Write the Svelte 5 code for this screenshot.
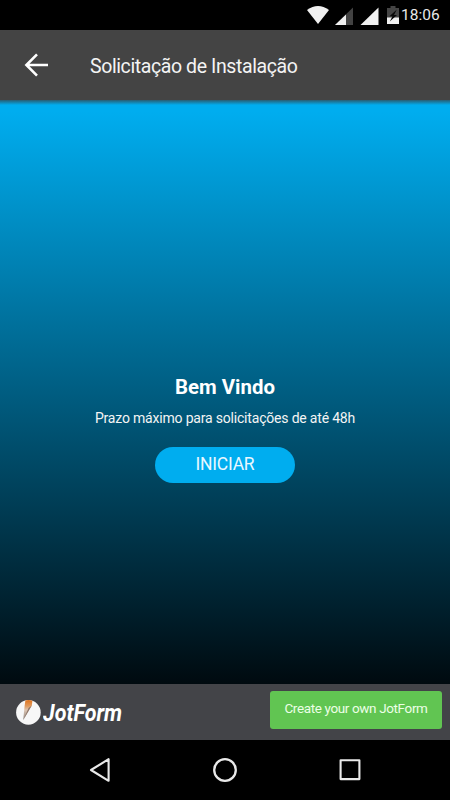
<script>
  const title = 'Solicitação de Instalação';
</script>

<div class="screen">
  <div class="status">
    <svg class="status-icons" width="94" height="30" viewBox="306 0 94 30" aria-hidden="true">
      <path d="M307 10 Q318 2 329 10 L318 24 Z" fill="#f0f0f0" />
      <path d="M353 7.5 V25 H335 Z" fill="#424242" />
      <path d="M346 14.5 V25 H335 Z" fill="#f0f0f0" />
      <path d="M378.5 7.5 V25 H360.5 Z" fill="#f0f0f0" />
      <path d="M387 8 H390.5 V6 H395.5 V8 H399 V24 H387 Z" fill="#454545" />
      <path d="M387 17.5 H399 V24 H387 Z" fill="#f0f0f0" />
      <path d="M396.8 9.5 L389.5 16.3 H392.5 L389.8 21.5 L397 15 H394 Z" fill="#080808" />
    </svg>
    <span class="time">18:06</span>
  </div>

  <header>
    <svg class="back" width="25" height="24" viewBox="0 0 25 24" fill="none" stroke="#fff" stroke-width="2.6" aria-hidden="true">
      <path d="M2.4 12 H24 M13 1.4 L2.4 12 L13 22.6" />
    </svg>
    <h1>{title}</h1>
  </header>

  <main>
    <h2>Bem Vindo</h2>
    <p>Prazo máximo para solicitações de até 48h</p>
    <button class="start">INICIAR</button>
  </main>

  <footer>
    <div class="brand">
      <svg width="26" height="26" viewBox="0 0 26 26" aria-hidden="true">
        <defs>
          <linearGradient id="pencil" x1="0" y1="0" x2="0" y2="1">
            <stop offset="0" stop-color="#e0731c" />
            <stop offset=".3" stop-color="#e09a5e" />
            <stop offset=".5" stop-color="#dcc4b2" />
            <stop offset="1" stop-color="#8a8480" />
          </linearGradient>
        </defs>
        <circle cx="12.4" cy="12.4" r="12.3" fill="#f7f7f7" />
        <path d="M9.4 .5 Q13 -.4 16.4 .8 L15.8 5.5 L7.2 20 L8.6 6 Z" fill="url(#pencil)" />
        <path d="M15.8 5.5 L7.2 20 L12.6 8 Z" fill="#8d7466" />
      </svg>
      <span>JotForm</span>
    </div>
    <button class="create">Create your own JotForm</button>
  </footer>

  <nav>
    <svg width="26" height="26" viewBox="0 0 26 26" fill="none" stroke="#e9e9e9" stroke-width="2.1" stroke-linejoin="round">
      <path d="M4 13 L21.6 2.2 V23.8 Z" />
    </svg>
    <svg width="26" height="26" viewBox="0 0 26 26" fill="none" stroke="#e9e9e9" stroke-width="2.3">
      <circle cx="13" cy="13" r="10.8" />
    </svg>
    <svg width="26" height="26" viewBox="0 0 26 26" fill="none" stroke="#e9e9e9" stroke-width="2.1" stroke-linejoin="round">
      <rect x="3.6" y="3.3" width="18.8" height="18.8" />
    </svg>
  </nav>
</div>

<style>
  :global(body) {
    margin: 0;
    background: #000;
  }
  .screen {
    width: 450px;
    height: 800px;
    display: flex;
    flex-direction: column;
    overflow: hidden;
    font-family: Roboto, 'Noto Sans', sans-serif;
    color: #f4f4f4;
    background: #000;
  }
  .status {
    height: 30px;
    display: flex;
    flex: none;
    padding-left: 306px;
  }
  .status-icons {
    flex: none;
  }
  .time {
    margin-left: 1px;
    font-size: 15.5px;
    line-height: 31px;
    color: #e8e8e8;
  }
  header {
    height: 70px;
    flex: none;
    display: flex;
    align-items: center;
    box-sizing: border-box;
    padding-left: 24px;
    background: #444;
  }
  .back {
    flex: none;
  }
  h1 {
    margin: 3px 0 0 41px;
    font-size: 19.5px;
    line-height: 24px;
    font-weight: 400;
    letter-spacing: -.4px;
    white-space: nowrap;
  }
  main {
    height: 584px;
    flex: none;
    box-sizing: border-box;
    padding-top: 275px;
    display: flex;
    flex-direction: column;
    align-items: center;
    background:
      linear-gradient(rgba(55, 65, 70, .75), rgba(0, 80, 120, 0) 5px),
      linear-gradient(#00adef 2%, #000a0f 100%);
  }
  h2 {
    margin: 0;
    font-size: 20.4px;
    line-height: 24px;
    font-weight: 700;
    color: #fff;
  }
  p {
    margin: 9px 0 0;
    font-size: 14px;
    line-height: 20px;
    letter-spacing: -.19px;
    white-space: nowrap;
  }
  button {
    border: 0;
    padding: 0;
    font-family: inherit;
    white-space: nowrap;
  }
  .start {
    width: 140px;
    height: 36px;
    margin-top: 19px;
    padding-bottom: 3px;
    border-radius: 18px;
    background: #00adef;
    color: #e9f8ff;
    font-size: 17.5px;
    letter-spacing: -.25px;
  }
  footer {
    height: 56px;
    flex: none;
    box-sizing: border-box;
    display: flex;
    justify-content: space-between;
    align-items: flex-start;
    padding: 7px 8px 0 16px;
    background: #434448;
  }
  .brand {
    display: flex;
    align-items: center;
    padding-top: 9px;
    height: 26px;
  }
  .brand span {
    margin-left: 1px;
    font-size: 24px;
    line-height: 26px;
    font-weight: 700;
    font-style: italic;
    color: #fff;
    transform: scaleX(.895);
    transform-origin: left center;
  }
  .create {
    width: 172px;
    height: 38px;
    padding-bottom: 4px;
    border-radius: 3px;
    background: #61c552;
    color: #ecffe6;
    font-size: 13.5px;
    letter-spacing: -.37px;
  }
  nav {
    height: 60px;
    flex: none;
    box-sizing: border-box;
    padding: 0 87px;
    display: flex;
    align-items: center;
    justify-content: space-between;
    background: #000;
  }
</style>
